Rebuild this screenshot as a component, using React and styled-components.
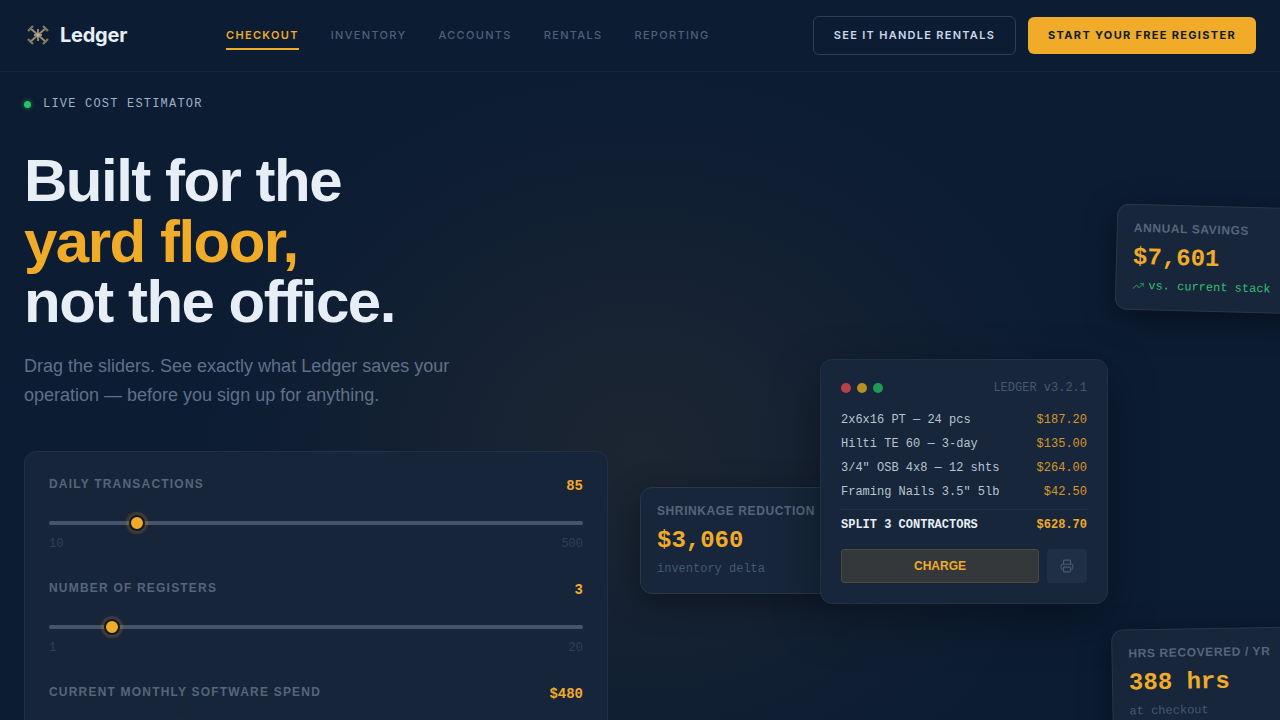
import React from "react";
import styled, { createGlobalStyle } from "styled-components";
import { Printer, TrendingUp } from "lucide-react";

const SANS = `"Liberation Sans", Arial, sans-serif`;
const MONO = `"Liberation Mono", "Courier New", monospace`;
const UI = `Inter, "Liberation Sans", sans-serif`;
const GOLD = "#f0ab28";

const Global = createGlobalStyle`
  html, body { margin: 0; padding: 0; height: 100%; overflow: hidden; background: #0c1c33; }
  * { box-sizing: border-box; }
`;

const Page = styled.div`
  position: relative;
  width: 1280px;
  height: 720px;
  overflow: hidden;
  font-family: ${SANS};
  background:
    radial-gradient(ellipse 440px 380px at 640px 450px, rgba(245, 166, 35, 0.07), transparent 100%),
    #0c1c33;
`;

const Nav = styled.header`
  display: flex;
  align-items: center;
  height: 72px;
  padding: 0 24px;
  border-bottom: 1px solid rgba(30, 51, 80, 0.4);
`;

const Brand = styled.div`
  display: flex;
  align-items: center;
  gap: 11px;
  width: 202px;
  margin-top: -1px;
  padding-left: 3px;
  font-family: ${UI};
  font-size: 20px;
  font-weight: 700;
  letter-spacing: -0.25px;
  color: #e8eef6;
`;

const Links = styled.nav`
  display: flex;
  gap: 32px;
`;

const NavLink = styled.a`
  padding: 6px 0;
  margin-top: 1px;
  font-family: ${UI};
  font-size: 11px;
  line-height: 14px;
  font-weight: ${(p) => (p.$active ? 600 : 500)};
  letter-spacing: 1.32px;
  color: ${(p) => (p.$active ? GOLD : "#506076")};
  border-bottom: 2px solid ${(p) => (p.$active ? GOLD : "transparent")};
`;

const Actions = styled.div`
  display: flex;
  gap: 12px;
  margin-left: auto;
`;

const NavButton = styled.button`
  height: ${(p) => (p.$solid ? "37px" : "39px")};
  align-self: center;
  padding: 0 20px;
  border-radius: 6px;
  border: ${(p) => (p.$solid ? "none" : "1px solid #2d3f58")};
  background: ${(p) => (p.$solid ? GOLD : "transparent")};
  color: ${(p) => (p.$solid ? "#0d1b2e" : "#cbd8e8")};
  font-family: ${UI};
  font-size: 11px;
  line-height: 13px;
  font-weight: ${(p) => (p.$solid ? 700 : 600)};
  letter-spacing: ${(p) => (p.$solid ? "1.32px" : "1.28px")};
`;

const Hero = styled.main`
  width: 632px;
  padding: 24px 24px 0;
`;

const Live = styled.div`
  display: flex;
  align-items: center;
  gap: 12px;
  height: 16px;
  font-family: ${MONO};
  font-size: 12px;
  letter-spacing: 1.2px;
  color: #9fb0c2;
`;

const LiveDot = styled.i`
  width: 7px;
  height: 7px;
  border-radius: 50%;
  background: #22c55e;
  box-shadow: 0 0 5px rgba(34, 197, 94, 0.6);
`;

const Title = styled.h1`
  margin: 39px 0 0;
  font-family: ${SANS};
  font-size: 60px;
  line-height: 60.5px;
  font-weight: 700;
  letter-spacing: -1.5px;
  color: #e8eef6;
`;

const Accent = styled.span`
  display: block;
  color: ${GOLD};
`;

const Lead = styled.p`
  width: 470px;
  margin: 19px 0 0;
  font-size: 18px;
  line-height: 29px;
  color: #5f7188;
`;

const Panel = styled.section`
  height: 320px;
  margin-top: 41px;
  padding: 24px;
  background: #17253a;
  border: 1px solid #1f3048;
  border-radius: 12px;
`;

const Field = styled.div`
  height: 104px;
`;

const FieldHead = styled.div`
  display: flex;
  justify-content: space-between;
  align-items: flex-start;
  height: 44px;
`;

const FieldLabel = styled.span`
  font-size: 12px;
  line-height: 16px;
  font-weight: 700;
  letter-spacing: 1.2px;
  color: #55657b;
`;

const FieldValue = styled.span`
  margin-top: 1px;
  font-family: ${MONO};
  font-size: 14px;
  line-height: 18px;
  font-weight: 700;
  color: ${GOLD};
`;

const Track = styled.div`
  position: relative;
  height: 4px;
  margin-top: 1px;
  border-radius: 2px;
  background: #455569;
`;

const Thumb = styled.span`
  position: absolute;
  top: -6px;
  width: 16px;
  height: 16px;
  margin-left: -8px;
  border-radius: 50%;
  background: ${GOLD};
  border: 2.5px solid #10192a;
  box-shadow: 0 0 0 3px rgba(245, 166, 35, 0.14), 0 0 8px rgba(245, 166, 35, 0.15);
`;

const Range = styled.div`
  display: flex;
  justify-content: space-between;
  margin-top: 12px;
  font-family: ${MONO};
  font-size: 12px;
  line-height: 14px;
  color: #2f3f54;
`;

// floating cards sit over the hero, so these are placed on the canvas
const Float = styled.aside`
  position: absolute;
  left: ${(p) => p.$left}px;
  top: ${(p) => p.$top}px;
  width: ${(p) => p.$width}px;
  height: ${(p) => p.$height}px;
  padding: 15px 16px;
  background: #17263b;
  border: 1px solid #2a3748;
  border-radius: 12px;
  transform: rotate(${(p) => p.$tilt || 0}deg);
  box-shadow: 0 8px 32px rgba(0, 0, 0, 0.4);
`;

const FloatLabel = styled.div`
  font-size: 12px;
  line-height: 16px;
  font-weight: 700;
  letter-spacing: 0.6px;
  white-space: nowrap;
  color: #55657b;
`;

const FloatValue = styled.div`
  margin-top: 7px;
  font-family: ${MONO};
  font-size: 24px;
  line-height: 30px;
  font-weight: 700;
  white-space: nowrap;
  color: ${GOLD};
`;

const FloatNote = styled.div`
  display: flex;
  align-items: center;
  gap: 4px;
  margin-top: 5px;
  font-family: ${MONO};
  font-size: 12px;
  line-height: 16px;
  white-space: nowrap;
  color: ${(p) => (p.$up ? "#35bf70" : "#46586e")};
`;

const UpIcon = styled(TrendingUp)`
  opacity: 0.6;
`;

const Register = styled.aside`
  position: absolute;
  left: 820px;
  top: 359px;
  width: 288px;
  height: 245px;
  padding: 20px;
  background: #17263b;
  border: 1px solid #1f3048;
  border-radius: 12px;
  box-shadow: 0 16px 48px rgba(0, 0, 0, 0.35);
`;

const Chrome = styled.div`
  display: flex;
  align-items: center;
  gap: 6px;
  height: 16px;
  margin-bottom: 12px;
`;

const Light = styled.i`
  width: 10px;
  height: 10px;
  border-radius: 50%;
  background: ${(p) => p.$color};
`;

const Version = styled.span`
  margin-left: auto;
  font-family: ${MONO};
  font-size: 12px;
  color: #46586e;
`;

const Line = styled.div`
  display: flex;
  justify-content: space-between;
  height: 24px;
  font-family: ${MONO};
  font-size: 12px;
  line-height: 24px;
  color: #b8c4d1;
`;

const Price = styled.span`
  color: ${GOLD};
  opacity: 0.85;
`;

const Total = styled(Line)`
  height: 32px;
  margin-top: 5px;
  padding-top: 3px;
  border-top: 1px solid #1f3048;
  font-weight: 700;
  color: #e8eef6;
`;

const TotalPrice = styled.span`
  color: ${GOLD};
`;

const RegisterActions = styled.div`
  display: flex;
  gap: 8px;
  margin-top: 8px;
`;

const Charge = styled.button`
  flex: 1;
  height: 34px;
  background: #34383a;
  border: 1px solid #4a4a42;
  border-radius: 3px;
  font-family: ${SANS};
  font-size: 12px;
  font-weight: 700;
  color: ${GOLD};
`;

const PrintButton = styled.button`
  display: flex;
  align-items: center;
  justify-content: center;
  width: 40px;
  height: 34px;
  padding: 0;
  background: #1f2f46;
  border: none;
  border-radius: 4px;
  color: #46586e;
`;

const LogoMark = () => (
  <svg width="22" height="20" viewBox="0 0 22 20" fill="none" stroke="#9a8e74" strokeWidth="1.8">
    <path d="M3 3l16 14M19 3L3 17" />
    <path d="M1 6l5-5M16 1l5 5M1 14l5 5M16 19l5-5" stroke="#7f7662" strokeWidth="2.4" />
    <path d="M11 4v12M7 10h8" stroke="#c2b28d" strokeWidth="1.4" />
  </svg>
);

const fields = [
  { label: "DAILY TRANSACTIONS", value: "85", min: "10", max: "500", at: 88 },
  { label: "NUMBER OF REGISTERS", value: "3", min: "1", max: "20", at: 63 },
  { label: "CURRENT MONTHLY SOFTWARE SPEND", value: "$480", min: "$0", max: "$3000", at: 134 },
];

const items = [
  ["2x6x16 PT — 24 pcs", "$187.20"],
  ["Hilti TE 60 — 3-day", "$135.00"],
  ['3/4" OSB 4x8 — 12 shts', "$264.00"],
  ['Framing Nails 3.5" 5lb', "$42.50"],
];

export default function App() {
  return (
    <Page>
      <Global />
      <Nav>
        <Brand>
          <LogoMark />
          Ledger
        </Brand>
        <Links>
          <NavLink $active>CHECKOUT</NavLink>
          <NavLink>INVENTORY</NavLink>
          <NavLink>ACCOUNTS</NavLink>
          <NavLink>RENTALS</NavLink>
          <NavLink>REPORTING</NavLink>
        </Links>
        <Actions>
          <NavButton>SEE IT HANDLE RENTALS</NavButton>
          <NavButton $solid>START YOUR FREE REGISTER</NavButton>
        </Actions>
      </Nav>

      <Hero>
        <Live>
          <LiveDot />
          LIVE COST ESTIMATOR
        </Live>
        <Title>
          Built for the
          <Accent>yard floor,</Accent>
          not the office.
        </Title>
        <Lead>
          Drag the sliders. See exactly what Ledger saves your operation — before you sign up for anything.
        </Lead>
        <Panel>
          {fields.map((f) => (
            <Field key={f.label}>
              <FieldHead>
                <FieldLabel>{f.label}</FieldLabel>
                <FieldValue>{f.value}</FieldValue>
              </FieldHead>
              <Track>
                <Thumb style={{ left: f.at }} />
              </Track>
              <Range>
                <span>{f.min}</span>
                <span>{f.max}</span>
              </Range>
            </Field>
          ))}
        </Panel>
      </Hero>

      <Float $left={1116} $top={206} $width={200} $height={106} $tilt={1.5}>
        <FloatLabel>ANNUAL SAVINGS</FloatLabel>
        <FloatValue>$7,601</FloatValue>
        <FloatNote $up>
          <UpIcon size={12} />
          vs. current stack
        </FloatNote>
      </Float>

      <Float $left={640} $top={487} $width={200} $height={107}>
        <FloatLabel>SHRINKAGE REDUCTION</FloatLabel>
        <FloatValue>$3,060</FloatValue>
        <FloatNote>inventory delta</FloatNote>
      </Float>

      <Float $left={1112} $top={628} $width={200} $height={110} $tilt={-1}>
        <FloatLabel>HRS RECOVERED / YR</FloatLabel>
        <FloatValue>388 hrs</FloatValue>
        <FloatNote>at checkout</FloatNote>
      </Float>

      <Register>
        <Chrome>
          <Light $color="#b8404a" />
          <Light $color="#b8901f" />
          <Light $color="#1f9a55" />
          <Version>LEDGER v3.2.1</Version>
        </Chrome>
        {items.map(([name, price]) => (
          <Line key={name}>
            <span>{name}</span>
            <Price>{price}</Price>
          </Line>
        ))}
        <Total>
          <span>SPLIT 3 CONTRACTORS</span>
          <TotalPrice>$628.70</TotalPrice>
        </Total>
        <RegisterActions>
          <Charge>CHARGE</Charge>
          <PrintButton>
            <Printer size={14} />
          </PrintButton>
        </RegisterActions>
      </Register>
    </Page>
  );
}
